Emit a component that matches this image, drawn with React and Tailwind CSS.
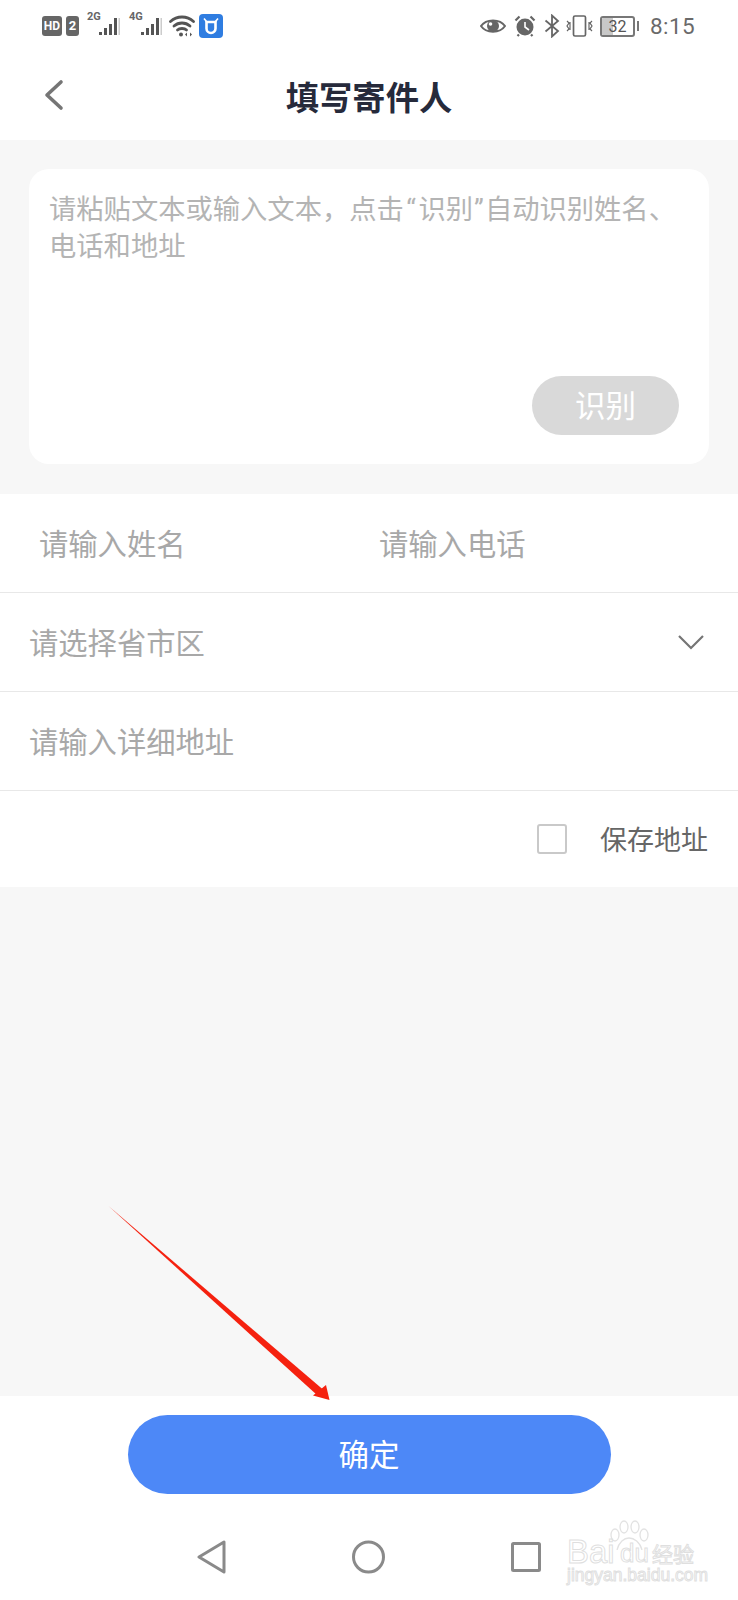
import React from "react";

// latin first so the curly quotes stay narrow, as in the screenshot
const cjk = "font-['Roboto','Noto_Sans_CJK_SC',sans-serif]";

function Signal({ label }) {
  return (
    <div className="relative w-[33px] h-[24px]">
      <span className="absolute left-0 top-[-3px] text-[11px] leading-[12px] font-bold text-[#666] font-['Roboto',sans-serif]">{label}</span>
      <svg className="absolute left-0 top-0" width="33" height="24" viewBox="0 0 33 24">
        <rect x="12" y="18" width="3" height="3" fill="#555" />
        <rect x="17" y="14" width="3" height="7" fill="#555" />
        <rect x="22" y="10" width="3" height="11" fill="#555" />
        <rect x="27" y="4" width="3" height="17" fill="#555" />
        <rect x="31.5" y="4" width="1.5" height="17" fill="#ccc" />
      </svg>
    </div>
  );
}

function StatusBar() {
  return (
    <div className="h-[55px] flex items-center justify-between pl-[42px] pr-[43px] pb-[3px] text-[#666]">
      <div className="flex items-center">
        <div className="w-[20px] h-[20px] rounded-[3px] bg-[#666] text-white text-[12px] font-bold leading-[20px] text-center font-['Roboto',sans-serif]">HD</div>
        <div className="w-[13px] h-[20px] ml-[4px] rounded-[3px] bg-[#666] text-white text-[13px] font-bold leading-[20px] text-center font-['Roboto',sans-serif]">2</div>
        <div className="ml-[8px]"><Signal label="2G" /></div>
        <div className="ml-[9px]"><Signal label="4G" /></div>
        <svg className="ml-[7px]" width="26" height="22" viewBox="0 0 26 22" fill="none" stroke="#555" strokeWidth="2.8" strokeLinecap="round">
          <path d="M1.5 6.5C8 0.5 18 0.5 24.5 6.5" />
          <path d="M5 11C9.5 7 16.5 7 21 11" />
          <path d="M8.5 15C10.5 13 15.5 13 17.5 15" />
          <circle cx="12" cy="19.5" r="2" fill="#555" stroke="none" />
          <path d="M18 17.5v4l-2-2zM21 17.5v4l2-2z" fill="#555" stroke="none" />
        </svg>
        <div className="ml-[4px] w-[24px] h-[24px] rounded-[4px] bg-[#2f7de1] flex items-center justify-center">
          <svg width="16" height="18" viewBox="0 0 16 18" fill="none" stroke="#fff" strokeWidth="2.6">
            <path d="M1 1.5L3.5 4.5M15 1.5L12.5 4.5" strokeWidth="1.6" />
            <path d="M3.5 5h9v6.5a4.5 4.5 0 0 1-9 0z" />
          </svg>
        </div>
      </div>
      <div className="flex items-center">
        <svg width="26" height="18" viewBox="0 0 26 18" fill="none">
          <path d="M1 9C6 1.5 20 1.5 25 9C20 16.5 6 16.5 1 9Z" stroke="#666" strokeWidth="2" />
          <circle cx="13" cy="9" r="6" fill="#666" />
          <circle cx="10.5" cy="7" r="1.8" fill="#fff" />
        </svg>
        <svg className="ml-[8px]" width="22" height="22" viewBox="0 0 22 22" fill="none">
          <circle cx="11" cy="12" r="8.5" fill="#666" />
          <path d="M11 7v5l4 3" stroke="#fff" strokeWidth="1.6" />
          <path d="M1.5 5.5L5.5 1.5M20.5 5.5L16.5 1.5M5 19.5L3.5 21M17 19.5L18.5 21" stroke="#666" strokeWidth="2.2" />
        </svg>
        <svg className="ml-[8px]" width="16" height="24" viewBox="0 0 16 24" fill="none" stroke="#666" strokeWidth="1.8">
          <path d="M1.5 6.5L14 17L8 22.5V1.5L14 7L1.5 17.5" />
        </svg>
        <svg className="ml-[6px]" width="27" height="22" viewBox="0 0 27 22" fill="none" stroke="#666" strokeWidth="1.7">
          <rect x="7.5" y="1" width="12" height="20" rx="1.5" />
          <path d="M1 6l2 2-2 3 2 3-2 2M4 7v8M26 6l-2 2 2 3-2 3 2 2M23 7v8" strokeWidth="1.2" />
        </svg>
        <div className="relative ml-[7px] w-[35px] h-[21px] rounded-[3px] border-2 border-[#777] overflow-hidden">
          <div className="absolute left-0 top-0 bottom-0 w-[11px] bg-[#c8c8c8]" />
          <span className="relative block text-center text-[16px] leading-[17px] text-[#555] font-['Roboto',sans-serif]">32</span>
        </div>
        <div className="ml-[2px] w-[2px] h-[10px] bg-[#777]" />
        <span className="ml-[11px] text-[22.5px] leading-[24px] tracking-[0.4px] text-[#6a6a6a] font-['Roboto',sans-serif]">8:15</span>
      </div>
    </div>
  );
}

export default function App() {
  return (
    <div className={`relative w-[738px] h-[1600px] bg-white flex flex-col overflow-hidden ${cjk}`}>
      <StatusBar />

      <div className="relative h-[85px] flex items-center justify-center">
        <svg className="absolute left-[44px] top-[24px]" width="20" height="32" viewBox="0 0 20 32" fill="none" stroke="#757575" strokeWidth="3.6" strokeLinecap="round" strokeLinejoin="round">
          <path d="M17 3L3 16L17 29" />
        </svg>
        <h1 className="text-[33.3px] leading-[40px] font-bold text-[#262a3b] mt-[3px]">填写寄件人</h1>
      </div>

      <div className="bg-[#f7f7f7] h-[354px] px-[29px] pt-[29px]">
        <div className="h-[295px] bg-white rounded-[20px] pl-[20px] pr-[29px] pt-[23px] flex flex-col">
          <p className="text-[27.3px] leading-[37px] text-[#b4b4b4] whitespace-nowrap">
            请粘贴文本或输入文本，点击<span className="mx-[2.5px]">“</span>识别<span className="mx-[1px]">”</span>自动识别姓名、
          </p>
          <p className="text-[27.3px] leading-[37px] text-[#b4b4b4]">电话和地址</p>
          <div className="mt-auto mb-[29px] self-end mr-[1px] w-[147px] h-[59px] pt-[3px] rounded-full bg-[#d9d9d9] text-white text-[30.5px] flex items-center justify-center">识别</div>
        </div>
      </div>

      <div className="h-[99px] flex items-center border-b border-[#e8e8e8] text-[29.3px] text-[#a8a8a8]">
        <span className="ml-[39px] w-[340px] pt-[6px]">请输入姓名</span>
        <span className="pt-[6px]">请输入电话</span>
      </div>
      <div className="h-[99px] flex items-center justify-between pl-[29px] pr-[34px] border-b border-[#e8e8e8] text-[29.3px] text-[#a8a8a8]">
        <span className="pt-[6px]">请选择省市区</span>
        <svg width="26" height="16" viewBox="0 0 26 16" fill="none" stroke="#757575" strokeWidth="2.2">
          <path d="M1 2L13 14L25 2" />
        </svg>
      </div>
      <div className="h-[99px] flex items-center pl-[29px] border-b border-[#e8e8e8] text-[29.3px] text-[#a8a8a8]">
        <span className="pt-[6px]">请输入详细地址</span>
      </div>
      <div className="h-[96px] flex items-center justify-end pr-[30px]">
        <div className="w-[30px] h-[30px] rounded-[3px] border-2 border-[#c9c9c9]" />
        <span className="ml-[33px] pt-[5px] text-[27px] text-[#666]">保存地址</span>
      </div>

      <div className="flex-1 bg-[#f7f7f7]" />

      <div className="h-[204px] bg-white flex flex-col items-center pt-[19px]">
        <button className="w-[483px] h-[79px] pt-[3px] rounded-full bg-[#4d88f7] text-white text-[30.5px]">确定</button>
        <div className="mt-[46px] w-[344px] h-[34px] flex items-center justify-between">
          <svg width="29" height="34" viewBox="0 0 29 34" fill="none" stroke="#8a8a8a" strokeWidth="3" strokeLinejoin="round">
            <path d="M27 2V32L2 17Z" />
          </svg>
          <svg width="33" height="34" viewBox="0 0 33 34" fill="none" stroke="#8a8a8a" strokeWidth="3">
            <circle cx="16.5" cy="17" r="15" />
          </svg>
          <svg width="30" height="30" viewBox="0 0 30 30" fill="none" stroke="#8a8a8a" strokeWidth="3" strokeLinejoin="round">
            <rect x="1.5" y="1.5" width="27" height="27" rx="1" />
          </svg>
        </div>
      </div>

      {/* annotation arrow on top of the page */}
      <svg className="absolute left-0 top-0 pointer-events-none" width="738" height="1600" viewBox="0 0 738 1600">
        <path d="M108.5 1206L323 1389.5L317 1395Z" fill="#f5210f" />
        <path d="M329.5 1400L313 1395.5L326 1385Z" fill="#f5210f" />
      </svg>

      {/* watermark */}
      <div className="absolute left-[567px] top-[1520px] w-[130px] h-[64px] pointer-events-none font-['Liberation_Sans',sans-serif] text-transparent [-webkit-text-stroke:1px_#dfdfdf]">
        <svg className="absolute left-[42px] top-0" width="40" height="30" viewBox="0 0 40 30" fill="none" stroke="#e2e2e2" strokeWidth="1.3">
          <ellipse cx="6" cy="15" rx="4" ry="6" />
          <ellipse cx="15" cy="7" rx="4" ry="6" />
          <ellipse cx="26" cy="7" rx="4" ry="6" />
          <ellipse cx="35" cy="15" rx="4" ry="6" />
          <path d="M8 30C10 22 15 18 20 18C25 18 31 22 33 30" />
        </svg>
        <span className="absolute left-0 top-[19px] text-[33px] leading-[26px]">Bai</span>
        <span className="absolute left-[53px] top-[22px] text-[26px] leading-[23px]">du</span>
        <span className="absolute left-[85px] top-[21px] text-[21px] leading-[24px] whitespace-nowrap font-['Noto_Sans_CJK_SC',sans-serif]">经验</span>
        <span className="absolute left-0 top-[46px] text-[17.5px] leading-[18px] whitespace-nowrap">jingyan.baidu.com</span>
      </div>
    </div>
  );
}
